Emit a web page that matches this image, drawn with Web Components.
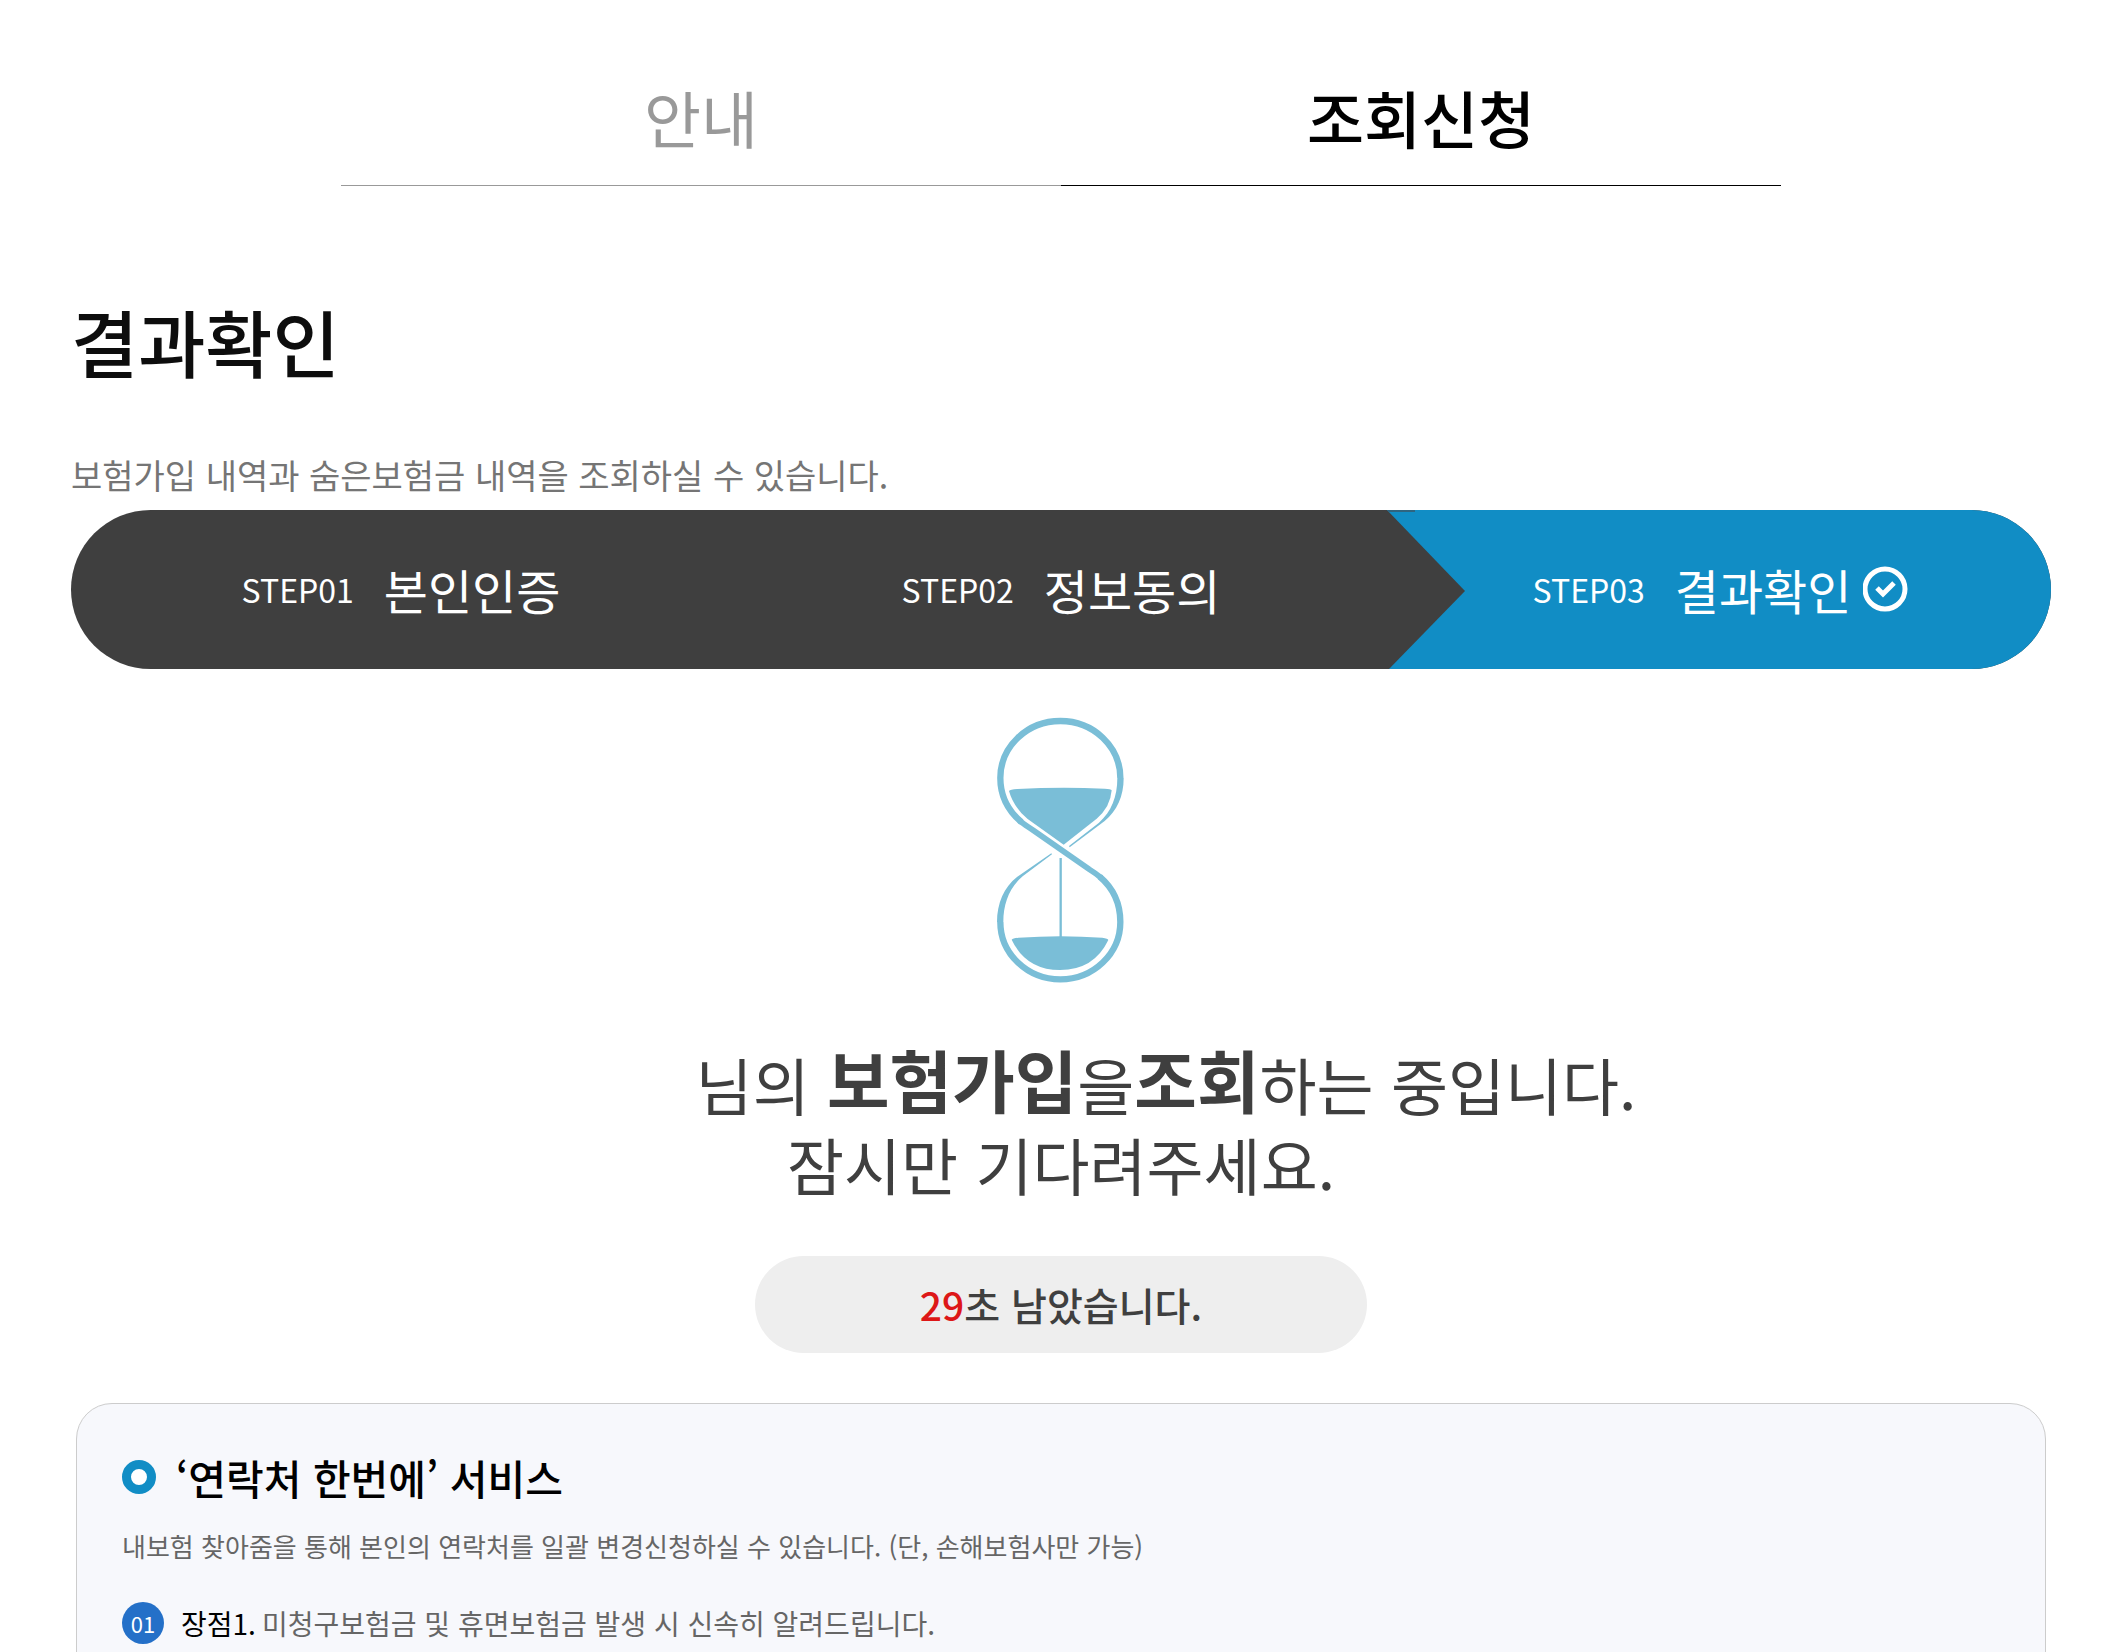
<!DOCTYPE html>
<html lang="ko">
<head>
<meta charset="utf-8">
<meta name="viewport" content="width=device-width, initial-scale=1">
<title>결과확인</title>
<style>
    body {
        margin: 0;
        background: #ffffff;
        color: #3f3f3f;
        font-family: "Noto Sans CJK KR", sans-serif;
    }
</style>
</head>
<body>

<result-page>
    <tab-menu slot="tabs">
        <tab-link href="#guide">안내</tab-link>
        <tab-link href="#inquiry" current>조회신청</tab-link>
    </tab-menu>
    <page-title>
        결과확인
        <span slot="desc">보험가입 내역과 숨은보험금 내역을 조회하실 수 있습니다.</span>
    </page-title>
    <step-bar>
        <step-item step="STEP01">본인인증</step-item>
        <step-item step="STEP02">정보동의</step-item>
        <step-item step="STEP03" current>결과확인</step-item>
    </step-bar>
    <loading-notice seconds="29"></loading-notice>
    <service-card>
        <span slot="title">‘연락처 한번에’ 서비스</span>
        <span slot="desc">내보험 찾아줌을 통해 본인의 연락처를 일괄 변경신청하실 수 있습니다. (단, 손해보험사만 가능)</span>
        <benefit-item number="01" label="장점1.">미청구보험금 및 휴면보험금 발생 시 신속히 알려드립니다.</benefit-item>
    </service-card>
</result-page>

<script>
class ResultPage extends HTMLElement {

    constructor() {
        super();

        const shadowRoot = this.attachShadow({mode: 'open'});

        shadowRoot.innerHTML = `
            <style>
                :host {
                    display: block;
                    padding: 50px 77px 0 71px;
                }
            </style>
            <slot name="tabs"></slot>
            <main><slot></slot></main>
        `;
    }
}

class TabMenu extends HTMLElement {

    constructor() {
        super();

        const shadowRoot = this.attachShadow({mode: 'open'});

        shadowRoot.innerHTML = `
            <style>
                :host {
                    display: block;
                    max-width: 1440px;
                    margin: 0 auto;
                }
                nav {
                    display: grid;
                    grid-template-columns: 1fr 1fr;
                }
            </style>
            <nav><slot></slot></nav>
        `;
    }
}

class TabLink extends HTMLElement {

    constructor() {
        super();

        const shadowRoot = this.attachShadow({mode: 'open'});

        shadowRoot.innerHTML = `
            <style>
                :host {
                    display: block;
                }
                a {
                    display: block;
                    border-bottom: 1px solid #999999;
                    color: #999999;
                    font-size: 62px;
                    line-height: 135px;
                    text-align: center;
                    text-decoration: none;
                }
                :host([current]) a {
                    border-color: #000000;
                    color: #000000;
                    font-weight: 500;
                }
            </style>
            <a><slot></slot></a>
        `;
    }

    connectedCallback() {
        const link = this.shadowRoot.querySelector('a');

        link.href = this.getAttribute('href');
        if (this.hasAttribute('current')) {
            link.setAttribute('aria-current', 'page');
        }
    }
}

class PageTitle extends HTMLElement {

    constructor() {
        super();

        const shadowRoot = this.attachShadow({mode: 'open'});

        shadowRoot.innerHTML = `
            <style>
                :host {
                    display: block;
                    margin: 104px 0 10px;
                }
                h1 {
                    margin: 0 0 60px;
                    color: #0d0d0d;
                    font-size: 73px;
                    font-weight: 500;
                    line-height: 100px;
                }
                p {
                    margin: 0;
                    color: #757575;
                    font-size: 34px;
                    line-height: 50px;
                }
            </style>
            <h1><slot></slot></h1>
            <p><slot name="desc"></slot></p>
        `;
    }
}

class StepBar extends HTMLElement {

    constructor() {
        super();

        const shadowRoot = this.attachShadow({mode: 'open'});

        shadowRoot.innerHTML = `
            <style>
                :host {
                    display: block;
                }
                div {
                    display: grid;
                    grid-template-columns: repeat(3, 1fr);
                    overflow: hidden;
                    border-radius: 80px;
                    background: #3f3f3f;
                }
            </style>
            <div role="list"><slot></slot></div>
        `;
    }
}

class StepItem extends HTMLElement {

    constructor() {
        super();

        const shadowRoot = this.attachShadow({mode: 'open'});

        shadowRoot.innerHTML = `
            <style>
                :host {
                    display: flex;
                    position: relative;
                    box-sizing: border-box;
                    align-items: center;
                    justify-content: center;
                    height: 159px;
                    padding-bottom: 2px;
                    color: #ffffff;
                }
                :host([current]) {
                    background: #118dc5;
                }
                .step {
                    margin-right: 30px;
                    font-size: 32px;
                }
                .name {
                    font-size: 48px;
                }
                .check,
                .arrow {
                    display: none;
                }
                :host([current]) .check {
                    display: block;
                    width: 46px;
                    height: 46px;
                    margin-left: 12px;
                }
                :host([current]) .arrow {
                    display: block;
                    position: absolute;
                    top: 0;
                    left: -4px;
                    width: 78px;
                    height: 100%;
                }
            </style>
            <svg class="arrow" viewBox="0 0 78 159" preserveAspectRatio="none" aria-hidden="true">
                <path d="M0 0H78V159H2Z" fill="#118dc5"/>
                <path d="M0 0L78 81L2 159H0Z" fill="#3f3f3f"/>
                <path d="M0 0H28V2H2Z" fill="#2f6580"/>
            </svg>
            <span class="step"></span>
            <span class="name"><slot></slot></span>
            <svg class="check" viewBox="0 0 46 46" fill="none" stroke="#ffffff" aria-hidden="true">
                <circle cx="22" cy="23" r="20" stroke-width="5"/>
                <path d="M14 22L20 28L31 17" stroke-width="5"/>
            </svg>
        `;
    }

    connectedCallback() {
        this.setAttribute('role', 'listitem');
        this.shadowRoot.querySelector('.step').textContent = this.getAttribute('step');
    }
}

class HourGlass extends HTMLElement {

    constructor() {
        super();

        const shadowRoot = this.attachShadow({mode: 'open'});

        // the right upper and left lower walls taper off near the neck, so they are filled shapes
        shadowRoot.innerHTML = `
            <style>
                :host {
                    display: block;
                }
                svg {
                    display: block;
                    width: 128px;
                    height: 266px;
                    margin: 0 auto;
                }
            </style>
            <svg viewBox="51 49 384 798" aria-hidden="true">
                <g fill="none" stroke="#7abed7" stroke-width="19">
                    <path d="M421 232A180 171 0 0 0 61 232C61 286 85 331 124 364"/>
                    <path d="M61 664A180 172 0 0 0 421 664C421 606 399 562 359 528"/>
                    <path d="M120 361C132 371 146 379 160 389L328 506Q346 517 364 532" stroke-width="17"/>
                    <path d="M242 472V710" stroke-width="7"/>
                </g>
                <g fill="#7abed7">
                    <path d="M412 232H431C431 287 411 330 374 361L269 440L267 436L357 366C394 333 412 289 412 232Z"/>
                    <path d="M70 664H51C51 609 72 559 111 529L214 458L216 461L128 527C88 561 70 609 70 664Z"/>
                    <path d="M87 271Q90 267 112 265Q242 258 374 264Q393 265 395 269Q391 320 350 354L251 432L143 355Q101 320 87 271Z"/>
                    <path d="M95 717Q98 713 115 711Q242 702 367 711Q384 713 385 718Q342 808 240 808Q138 808 95 717Z"/>
                </g>
            </svg>
        `;
    }
}

class LoadingNotice extends HTMLElement {

    constructor() {
        super();

        const shadowRoot = this.attachShadow({mode: 'open'});

        shadowRoot.innerHTML = `
            <style>
                :host {
                    display: block;
                    padding: 48px 0 50px;
                }
                .message {
                    margin: 61px 0 52px;
                    font-size: 62px;
                    line-height: 80px;
                    text-align: center;
                }
                .user {
                    display: inline-block;
                    width: 210px;
                }
                strong {
                    font-size: 68px;
                    font-weight: 700;
                    line-height: 60px;
                    vertical-align: 3px;
                }
                .remain {
                    max-width: 612px;
                    margin: 0 auto;
                    border-radius: 49px;
                    background: #eeeeee;
                    font-size: 39px;
                    font-weight: 500;
                    line-height: 97px;
                    text-align: center;
                }
                #seconds {
                    color: #dd1717;
                }
            </style>
            <hour-glass></hour-glass>
            <p class="message"><span class="user"></span>님의 <strong>보험가입</strong>을<strong>조회</strong>하는 중입니다.<br>잠시만 기다려주세요.</p>
            <div class="remain" role="timer"><span id="seconds"></span>초 남았습니다.</div>
        `;
    }

    connectedCallback() {
        this.shadowRoot.querySelector('#seconds').textContent = this.getAttribute('seconds');
    }
}

class ServiceCard extends HTMLElement {

    constructor() {
        super();

        const shadowRoot = this.attachShadow({mode: 'open'});

        shadowRoot.innerHTML = `
            <style>
                :host {
                    display: block;
                    margin: 0 5px;
                    padding: 43px 45px;
                    border: 1px solid #cccccc;
                    border-radius: 36px;
                    background: #f7f8fc;
                }
                h2 {
                    display: flex;
                    align-items: center;
                    gap: 20px;
                    margin: 0;
                    color: #000000;
                    font-size: 41px;
                    font-weight: 500;
                    line-height: 60px;
                }
                h2::before {
                    content: '';
                    box-sizing: border-box;
                    width: 34px;
                    height: 34px;
                    border: 9px solid #118dc5;
                    border-radius: 50%;
                    background: #ffffff;
                }
                p {
                    margin: 19px 0 36px;
                    color: #666666;
                    font-size: 26px;
                    line-height: 40px;
                }
            </style>
            <section>
                <h2><slot name="title"></slot></h2>
                <p><slot name="desc"></slot></p>
                <slot></slot>
            </section>
        `;
    }
}

class BenefitItem extends HTMLElement {

    constructor() {
        super();

        const shadowRoot = this.attachShadow({mode: 'open'});

        shadowRoot.innerHTML = `
            <style>
                :host {
                    display: flex;
                    align-items: center;
                    color: #666666;
                    font-size: 28px;
                    line-height: 42px;
                }
                .number {
                    width: 42px;
                    margin-right: 17px;
                    border-radius: 50%;
                    background: #2470c8;
                    color: #ffffff;
                    font-size: 22px;
                    text-align: center;
                }
                .label {
                    margin-right: 6px;
                    color: #000000;
                }
            </style>
            <span class="number"></span>
            <span class="label"></span>
            <span><slot></slot></span>
        `;
    }

    connectedCallback() {
        this.shadowRoot.querySelector('.number').textContent = this.getAttribute('number');
        this.shadowRoot.querySelector('.label').textContent = this.getAttribute('label');
    }
}

customElements.define('result-page', ResultPage);
customElements.define('tab-menu', TabMenu);
customElements.define('tab-link', TabLink);
customElements.define('page-title', PageTitle);
customElements.define('step-bar', StepBar);
customElements.define('step-item', StepItem);
customElements.define('hour-glass', HourGlass);
customElements.define('loading-notice', LoadingNotice);
customElements.define('service-card', ServiceCard);
customElements.define('benefit-item', BenefitItem);
</script>
</body>
</html>
